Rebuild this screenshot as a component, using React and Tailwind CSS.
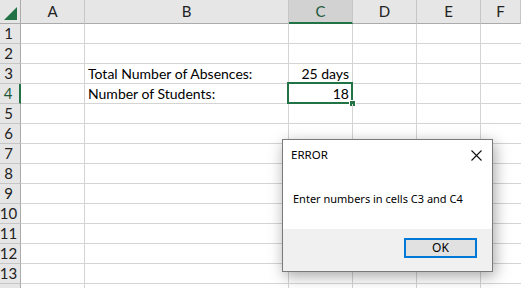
import React from "react";

const cellFont = { fontFamily: "Lato, 'Liberation Sans', sans-serif" };

function HeaderRow() {
  const cols = [
    { l: "A", w: "w-[64px]" },
    { l: "B", w: "w-[204px]" },
    { l: "C", w: "w-[64px]", sel: true },
    { l: "D", w: "w-[64px]" },
    { l: "E", w: "w-[64px]" },
    { l: "F", w: "flex-1" },
  ];
  return (
    <div className="flex h-[24px] shrink-0">
      <div className="w-[21px] shrink-0 h-full bg-[#e6e6e6] border-r border-b border-[#ababab] relative">
        <svg className="absolute left-[4px] top-[7px]" width="13" height="13" viewBox="0 0 13 13">
          <polygon points="13,0 13,13 0,13" fill="#217346" />
        </svg>
      </div>
      {cols.map((c) => (
        <div
          key={c.l}
          className={`${c.w} shrink-0 h-full flex items-center justify-center text-[15px] border-r border-[#c6c6c6] ${
            c.sel
              ? "bg-[#d2d2d2] border-b-2 border-b-[#217346] text-[#1e5a3a]"
              : "bg-[#e6e6e6] border-b border-b-[#ababab] text-[#222]"
          }`}
          style={cellFont}
        >
          <span className="leading-none">{c.l}</span>
        </div>
      ))}
    </div>
  );
}

function Row({ n, b, c, selected }) {
  return (
    <div className="flex h-[20px] shrink-0">
      <div
        className={`w-[21px] shrink-0 h-full bg-[#e6e6e6] border-b border-[#c6c6c6] flex items-center justify-center pr-[3px] text-[15px] ${
          selected ? "border-r-2 border-r-[#217346] text-[#1e5a3a]" : "border-r border-r-[#ababab] text-[#222]"
        }`}
        style={cellFont}
      >
        <span className="leading-none">{n}</span>
      </div>
      <div className="w-[64px] shrink-0 h-full border-r border-b border-[#d4d4d4]" />
      <div
        className="w-[204px] shrink-0 h-full border-r border-b border-[#d4d4d4] flex items-end pl-[3px] pb-[1px] text-[14px] text-black whitespace-nowrap"
        style={cellFont}
      >
        <span className="leading-[17px]">{b}</span>
      </div>
      <div
        className="w-[64px] shrink-0 h-full border-r border-b border-[#d4d4d4] flex items-end justify-end pr-[3px] pb-[1px] text-[14px] text-black relative whitespace-nowrap"
        style={cellFont}
      >
        <span className="leading-[17px]">{c}</span>
        {selected && (
          <div className="absolute left-[-2px] top-[-2px] w-[66px] h-[22px] border-2 border-[#217346]">
            <div className="absolute right-[-5px] bottom-[-5px] w-[7px] h-[7px] bg-[#217346] border border-white" />
          </div>
        )}
      </div>
      <div className="w-[64px] shrink-0 h-full border-r border-b border-[#d4d4d4]" />
      <div className="w-[64px] shrink-0 h-full border-r border-b border-[#d4d4d4]" />
      <div className="flex-1 h-full border-b border-[#d4d4d4]" />
    </div>
  );
}

export default function App() {
  const rows = [];
  for (let i = 1; i <= 14; i++) {
    rows.push(
      <Row
        key={i}
        n={i <= 13 ? i : ""}
        b={i === 3 ? "Total Number of Absences:" : i === 4 ? "Number of Students:" : ""}
        c={i === 3 ? "25 days" : i === 4 ? "18" : ""}
        selected={i === 4}
      />
    );
  }
  return (
    <div className="w-[521px] h-[288px] overflow-hidden bg-white relative flex flex-col">
      <HeaderRow />
      {rows}
      <div
        className="absolute left-[282px] top-[139px] w-[211px] h-[133px] bg-white border border-[#7a7a7a] shadow-[2px_4px_14px_rgba(0,0,0,0.35)] flex flex-col"
        style={{ fontFamily: "'Noto Sans', 'Liberation Sans', sans-serif" }}
      >
        <div className="h-[30px] shrink-0 flex items-center justify-between pl-[8px] pr-[10px] text-[11.5px] text-black">
          <span>ERROR</span>
          <svg width="11" height="11" viewBox="0 0 11 11">
            <path d="M0.5 0.5 L10.5 10.5 M10.5 0.5 L0.5 10.5" stroke="#111" strokeWidth="1.1" />
          </svg>
        </div>
        <div className="flex-1 flex items-center pl-[10px] text-[11px] text-black whitespace-nowrap">
          Enter numbers in cells C3 and C4
        </div>
        <div className="h-[42px] shrink-0 bg-[#f0f0f0] flex justify-end items-start pt-[9px] pr-[15px]">
          <div className="w-[73px] h-[20px] bg-[#e1e1e1] border-2 border-[#0078d7] flex items-center justify-center text-[12px] text-black">
            OK
          </div>
        </div>
      </div>
    </div>
  );
}
